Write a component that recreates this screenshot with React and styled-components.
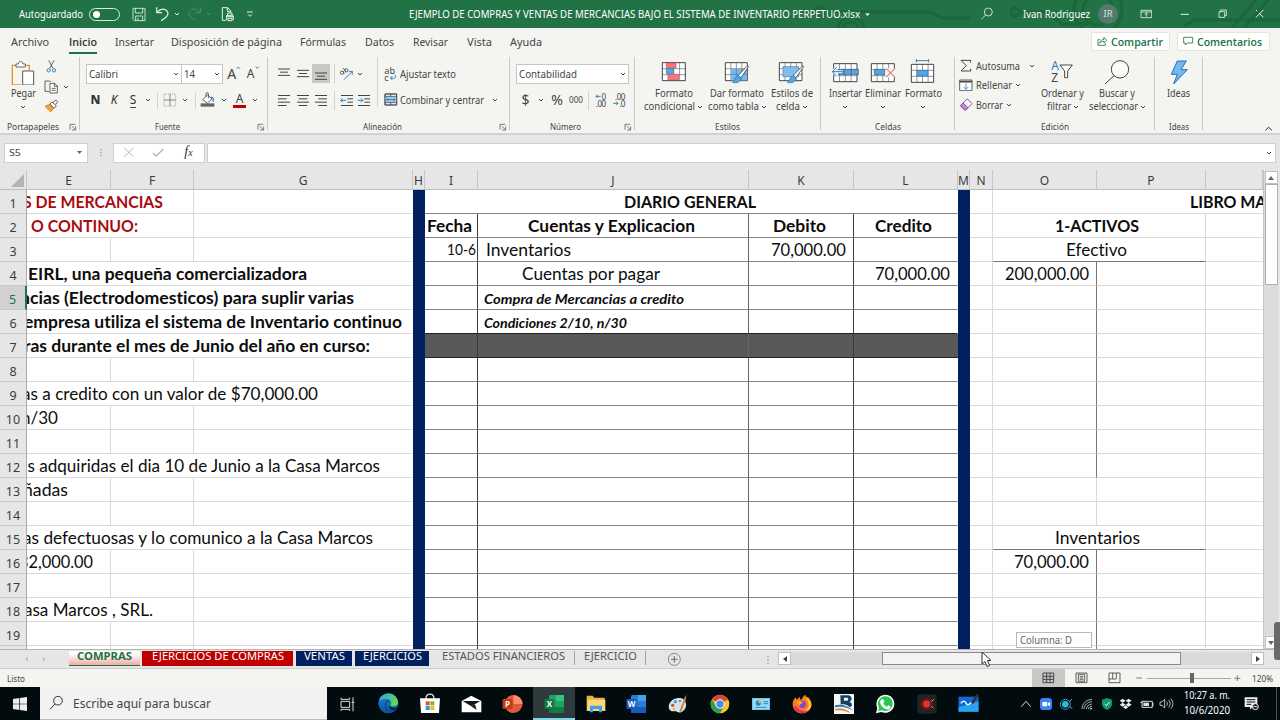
import { useLayoutEffect, useRef, useState } from "react"
import styled, { createGlobalStyle } from "styled-components"

const UI_FONT = `"Noto Sans", "Open Sans", sans-serif`
const SEMI_FONT = `"Open Sans", "Noto Sans", sans-serif`
const CELL_FONT = `Lato, "Open Sans", sans-serif`

// Condenses or widens the text so it fills exactly w pixels
function Fit({ w, children, ...rest }) {
    const ref = useRef(null)
    const [scale, setScale] = useState(1)

    useLayoutEffect(() => {
        const el = ref.current
        el.style.transform = "none"
        setScale(w / el.getBoundingClientRect().width)
    }, [w, children])

    return (
        <FitBox $w={w} {...rest}>
            <FitText ref={ref} style={{ transform: `scaleX(${scale})` }}>{children}</FitText>
        </FitBox>
    )
}

// Drawings are made at three units per pixel
function Glyph({ box, children, ...rest }) {
    const [, , w, h] = box.split(" ").map(Number)
    return (
        <svg viewBox={box} width={w / 3} height={h / 3} fill="none" stroke="#444" strokeWidth="3" {...rest}>
            {children}
        </svg>
    )
}

const Chevron = ({ color = "#444" }) => (
    <Glyph box="0 0 18 12" stroke={color}><path d="M3 3 9 9 15 3" /></Glyph>
)

const Launcher = () => (
    <Glyph box="0 0 24 24" strokeWidth="2">
        <path d="M3 20V4H19M8 9 19 20M20 10V21H9" />
    </Glyph>
)

function TitleBar() {
    return (
        <Title>
            <Circuit viewBox="0 0 480 28" width="480" height="28">
                <path d="M30 12H130L142 18H170M0 12H14" />
                <circle cx="20" cy="12" r="5" />
                <circle cx="51" cy="30" r="13" />
                <circle cx="51" cy="30" r="8" />
                <circle cx="215" cy="12" r="4" />
                <path d="M220 12H248L262 24H288" />
                <circle cx="298" cy="10" r="24" />
                <circle cx="298" cy="10" r="15" />
                <path d="M384 26 394 20H480M432 28 456 0M444 28 468 0" />
            </Circuit>
            <Slot $w={19} />
            <TitleText><Fit w={64}>Autoguardado</Fit></TitleText>
            <Slot $w={42}><Toggle><Knob /></Toggle></Slot>
            <Slot $w={27}>
                <Glyph box="396 24 42 45" stroke="#e6f2ea" strokeWidth="2.5">
                    <path d="M399 28H435V65H403L399 61ZM406 28V42H428V28M407 65V51H428V65M414 65V57" />
                </Glyph>
            </Slot>
            <Slot $w={20}>
                <Glyph box="466 22 42 48" stroke="#e6f2ea" strokeWidth="3.5">
                    <path d="M471 26V42H487M472 41C482 29 496 28 503 38C509 50 499 57 484 66" />
                </Glyph>
            </Slot>
            <Slot $w={9}><Chevron color="#e6f2ea" /></Slot>
            <Slot $w={27}>
                <Glyph box="566 22 42 48" stroke="#4c9069" strokeWidth="3">
                    <path d="M603 26V42H587M602 41C592 29 578 28 571 38C565 50 575 57 590 66" />
                </Glyph>
            </Slot>
            <Slot $w={2}><Chevron color="#4c9069" /></Slot>
            <Slot $w={36}>
                <Glyph box="664 22 42 48" stroke="#e6f2ea" strokeWidth="3">
                    <path d="M679 65H668V27H684L693 36V42M683 27V38H693M681 56V50H700V56M684 50V43H697V50M681 65V54H701V63H698M685 59H697V66H685Z" />
                </Glyph>
            </Slot>
            <Slot $w={8}>
                <Glyph box="740 32 24 24" stroke="#e6f2ea"><path d="M743 38H760M746 45 752 51 758 45" /></Glyph>
            </Slot>
            <Slot $w={155} />
            <TitleText><Fit w={451}>EJEMPLO DE COMPRAS Y VENTAS DE MERCANCIAS BAJO EL SISTEMA DE INVENTARIO PERPETUO.xlsx</Fit></TitleText>
            <Slot $w={15}><svg width="5" height="3"><path d="M0 0H5L2.5 3Z" fill="#fff" /></svg></Slot>
            <Slot $w={100} />
            <Slot $w={26}>
                <Glyph box="96 22 40 40" stroke="#e6f2ea" strokeWidth="2.5">
                    <circle cx="118" cy="37" r="12" /><path d="M110 46 97 59" />
                </Glyph>
            </Slot>
            <Slot $w={22} />
            <TitleText><Fit w={67}>Ivan Rodriguez</Fit></TitleText>
            <Slot $w={36}><Avatar>IR</Avatar></Slot>
            <Slot $w={40}>
                <Glyph box="570 28 38 30" stroke="#e6f2ea" strokeWidth="2.5">
                    <path d="M573 32H605V54H573ZM573 37H605M589 51V41M584 45 589 40 594 45" />
                </Glyph>
            </Slot>
            <Slot $w={38}><Glyph box="690 36 30 12" stroke="#e6f2ea"><path d="M692 43H717" /></Glyph></Slot>
            <Slot $w={37}>
                <Glyph box="804 28 30 30" stroke="#e6f2ea" strokeWidth="2.5">
                    <path d="M807 36H824V53H807ZM812 36V31H829V48H824" />
                </Glyph>
            </Slot>
            <Slot $w={38}><Glyph box="918 28 28 28" stroke="#e6f2ea"><path d="M921 31 943 53M943 31 921 53" /></Glyph></Slot>
        </Title>
    )
}

const menuTabs = [
    ["Archivo", 38, 10.5], ["Inicio", 28, 20.5], ["Insertar", 39, 17.5], ["Disposición de página", 111, 17.5],
    ["Fórmulas", 46, 18], ["Datos", 29, 18.5], ["Revisar", 35, 19], ["Vista", 25, 19], ["Ayuda", 32, 18],
]

function MenuBar() {
    return (
        <Menu>
            {menuTabs.map(([name, w, gap]) => (
                <MenuTab key={name} $gap={gap} $active={name === "Inicio"}><Fit w={w}>{name}</Fit></MenuTab>
            ))}
            <Push />
            <ShareButton $w={79}>
                <Glyph box="442 108 32 32" stroke="#217346" strokeWidth="2.5">
                    <path d="M451 119H445V136H467V130M450 130C452 121 458 118 463 118V112L471 121 463 129V124C457 124 453 126 450 130Z" />
                </Glyph>
                <Fit w={52}>Compartir</Fit>
            </ShareButton>
            <ShareButton $w={93}>
                <Glyph box="702 108 32 32" stroke="#217346" strokeWidth="2.5">
                    <path d="M704 112H731V129H715L709 135V129H704Z" />
                </Glyph>
                <Fit w={65}>Comentarios</Fit>
            </ShareButton>
        </Menu>
    )
}

const Lines = ({ rows, arrow, into }) => (
    <Glyph box="0 0 42 39" strokeWidth="3">
        {rows.map(([x1, x2], i) => (
            <path key={i} d={`M${x1} ${4.5 + i * 10}H${x2}`} />
        ))}
        {arrow && <path stroke="#2f7fc1" d={into ? "M2 19H18M12 13 18 19 12 25" : "M18 19H2M8 13 2 19 8 25"} />}
    </Glyph>
)

const left = [[3, 39], [3, 29], [3, 39], [3, 29]]
const middle = [[3, 39], [8, 34], [3, 39], [8, 34]]
const right = [[3, 39], [13, 39], [3, 39], [13, 39]]
const indent = [[3, 39], [22, 39], [22, 39], [3, 39]]

const VAlign = ({ y }) => (
    <Glyph box="0 0 42 45"><path d={`M3 ${y}H39M9 ${y + 9.5}H33M3 ${y + 19}H39`} /></Glyph>
)

const TableLines = ({ x, y, w = 69, h = 54 }) => (
    <>
        <path d={`M${x} ${y}h${w}v${h}h-${w}Z`} fill="#fff" stroke="none" />
        <path strokeWidth="2" stroke="#666" d={`M${x} ${y + h / 3}h${w}M${x} ${y + (h * 2) / 3}h${w}M${x + w / 4} ${y}v${h}M${x + w / 2} ${y}v${h}M${x + (w * 3) / 4} ${y}v${h}`} />
        <path d={`M${x} ${y}h${w}v${h}h-${w}Z`} />
    </>
)

const Brush = ({ x, y }) => (
    <g transform={`translate(${x} ${y})`} strokeWidth="2.5">
        <path d="M50 3 28 35 20 28 45 2C48-1 53 0 50 3Z" fill="#fff" />
        <path d="M20 29 28 36C28 48 14 53 2 49C9 45 9 31 20 29Z" fill="#5ba3dc" stroke="#2f7fc1" />
    </g>
)

function BigButton({ w, icon, lines, chevron }) {
    return (
        <Big $w={w}>
            <BigIcon>{icon}</BigIcon>
            {lines.map(([text, tw, arrow]) => (
                <BigLine key={text}>
                    <Fit w={tw}>{text}</Fit>
                    {arrow && <Chevron />}
                </BigLine>
            ))}
            {chevron && <BigLine><Chevron /></BigLine>}
        </Big>
    )
}

function Group({ w, label, lw, launcher, children }) {
    return (
        <>
            <GroupBox $w={w - 1}>
                <GroupBody>{children}</GroupBody>
                <GroupFoot>
                    <GroupLabel><Fit w={lw}>{label}</Fit></GroupLabel>
                    {launcher && <Slot $w={13}><Launcher /></Slot>}
                </GroupFoot>
            </GroupBox>
            <GroupRule />
        </>
    )
}

function Ribbon() {
    return (
        <RibbonBar>
            <Group w={80} label="Portapapeles" lw={52} launcher>
                <BigButton w={46} chevron lines={[["Pegar", 25]]} icon={
                    <Glyph box="42 174 72 80" strokeWidth="3">
                        <path d="M60 193H46V252H72M84 193H97V208" stroke="#e8912d" strokeWidth="4" />
                        <path d="M57 198V189H64C64 179 78 179 78 189H85V198Z" fill="#fff" stroke="#666" />
                        <path d="M77 210H110V252H77Z" fill="#fff" stroke="#555" />
                    </Glyph>
                } />
                <Stack>
                    <Line $h={20}><Slot $w={11}>
                        <Glyph box="136 182 32 40">
                            <path d="M144 183 157 207M160 183 147 207" strokeWidth="2.5" />
                            <circle cx="144" cy="213" r="5" stroke="#2f7fc1" /><circle cx="160" cy="213" r="5" stroke="#2f7fc1" />
                        </Glyph>
                    </Slot></Line>
                    <Line $h={19}>
                        <Slot $w={11}>
                            <Glyph box="131 240 44 42" strokeWidth="2.5">
                                <path d="M146 274H134V243H148L151 246" />
                                <path d="M149 250H163L171 258V279H149ZM162 250V259H171M154 265H166M154 271H166" fill="#fff" />
                            </Glyph>
                        </Slot>
                        <Slot $w={17}><Chevron /></Slot>
                    </Line>
                    <Line $h={20}><Slot $w={11}>
                        <Glyph box="131 298 44 42">
                            <path d="M134 320 148 314 160 326 151 337Z" fill="#f2a33a" stroke="#e08a20" />
                            <path d="M149 313 155 307 168 318 161 326ZM158 308 167 301 172 306 166 314" fill="#fff" strokeWidth="2.5" />
                        </Glyph>
                    </Slot></Line>
                </Stack>
            </Group>

            <Group w={188} label="Fuente" lw={25} launcher>
                <Stack>
                    <Line $h={33}>
                        <Slot $w={6} />
                        <Combo $w={96}><Fit w={29}>Calibri</Fit><Chevron /></Combo>
                        <Combo $w={41} $joined><Fit w={11}>14</Fit><Chevron /></Combo>
                        <Slot $w={22}><FontSizer $size={14}>A<Glyph box="0 0 14 10" stroke="#2f7fc1"><path d="M2 8 7 3 12 8" /></Glyph></FontSizer></Slot>
                        <Slot $w={16}><FontSizer $size={12}>A<Glyph box="0 0 14 10" stroke="#2f7fc1"><path d="M2 2 7 7 12 2" /></Glyph></FontSizer></Slot>
                    </Line>
                    <Line $h={20}>
                        <Slot $w={6} />
                        <Slot $w={19}><Style $weight={800}>N</Style></Slot>
                        <Slot $w={18}><Style $italic>K</Style></Slot>
                        <Slot $w={20}><Style $under>S</Style></Slot>
                        <Slot $w={10}><Chevron /></Slot>
                        <Slot $w={9}><Rule $h={17} /></Slot>
                        <Slot $w={16}>
                            <Glyph box="490 278 42 42" strokeWidth="2" stroke="#777">
                                <path d="M493 281H528V317H493Z" strokeDasharray="3 3" />
                                <path d="M511 281V317M493 299H528" stroke="#555" />
                            </Glyph>
                        </Slot>
                        <Slot $w={14}><Chevron /></Slot>
                        <Slot $w={7}><Rule $h={17} /></Slot>
                        <Slot $w={18}>
                            <Glyph box="602 276 46 48" strokeWidth="2.5">
                                <path d="M610 299 625 284 638 297 624 309ZM620 290V281C620 277 627 277 627 281V295" fill="#fff" />
                                <path d="M635 292C643 291 642 299 641 305" stroke="#2f7fc1" strokeWidth="4" />
                                <path d="M604 310H645V320H604Z" fill="#666" stroke="none" />
                            </Glyph>
                        </Slot>
                        <Slot $w={13}><Chevron /></Slot>
                        <Slot $w={19}><FontColor>A</FontColor></Slot>
                        <Slot $w={12}><Chevron /></Slot>
                    </Line>
                </Stack>
            </Group>

            <Group w={242} label="Alineación" lw={39} launcher>
                <Stack>
                    <Line $h={33}>
                        <Slot $w={7} />
                        <Slot $w={18}><VAlign y={9} /></Slot>
                        <Slot $w={19}><VAlign y={13} /></Slot>
                        <Pressed><VAlign y={21} /></Pressed>
                        <Slot $w={8}><Rule $h={19} /></Slot>
                        <Slot $w={17}>
                            <Glyph box="0 0 44 42">
                                <path d="M15 38 39 14M30 13H40V23" stroke="#2f7fc1" />
                                <g strokeWidth="2.5"><circle cx="9" cy="17" r="5" /><path d="M11 12 16 20M12 3 22 14" /><circle cx="22" cy="10" r="5" /></g>
                            </Glyph>
                        </Slot>
                        <Slot $w={10}><Chevron /></Slot>
                    </Line>
                    <Line $h={20}>
                        <Slot $w={7} />
                        <Slot $w={18}><Lines rows={left} /></Slot>
                        <Slot $w={19}><Lines rows={middle} /></Slot>
                        <Slot $w={18}><Lines rows={right} /></Slot>
                        <Slot $w={8}><Rule $h={19} /></Slot>
                        <Slot $w={17}><Lines rows={indent} arrow /></Slot>
                        <Slot $w={18}><Lines rows={indent} arrow into /></Slot>
                    </Line>
                </Stack>
                <Slot $w={8}><Rule $h={50} /></Slot>
                <Stack>
                    <Line $h={33}>
                        <Slot $w={19}>
                            <WrapIcon>
                                <span>ab</span>
                                <span>c<Glyph box="0 0 24 20" stroke="#2f7fc1"><path d="M18 2C24 12 16 14 5 12M10 6 4 12 10 18" /></Glyph></span>
                            </WrapIcon>
                        </Slot>
                        <Fit w={56}>Ajustar texto</Fit>
                    </Line>
                    <Line $h={20}>
                        <Slot $w={19}>
                            <Glyph box="341 115 42 40" strokeWidth="2.5">
                                <path d="M344 118H379V151H344Z" fill="#fff" />
                                <path d="M344 126H379V143H344Z" fill="#9fd0f3" stroke="none" />
                                <path d="M344 125H379M344 144H379M361 118V125M361 144V151M344 118H379V151H344Z" />
                                <path d="M349 135H374M354 130 349 135 354 140M369 130 374 135 369 140" stroke="#1f6fb3" />
                            </Glyph>
                        </Slot>
                        <Fit w={84}>Combinar y centrar</Fit>
                        <Slot $w={22}><Chevron /></Slot>
                    </Line>
                </Stack>
            </Group>

            <Group w={125} label="Número" lw={31} launcher>
                <Stack>
                    <Line $h={33}>
                        <Slot $w={6} />
                        <Combo $w={113}><Fit w={58}>Contabilidad</Fit><Chevron /></Combo>
                    </Line>
                    <Line $h={20}>
                        <Slot $w={7} />
                        <Slot $w={17}><Symbol $size={14}>$</Symbol></Slot>
                        <Slot $w={13}><Chevron /></Slot>
                        <Slot $w={20}><Symbol $size={14}>%</Symbol></Slot>
                        <Slot $w={18}><Symbol $size={9}><Fit w={14}>000</Fit></Symbol></Slot>
                        <Slot $w={7}><Rule $h={19} /></Slot>
                        <Slot $w={17}>
                            <Decimals>
                                <span><Glyph box="0 0 18 14" stroke="#2f7fc1"><path d="M17 7H3M8 2 3 7 8 12" /></Glyph>0</span>
                                <span>.00</span>
                            </Decimals>
                        </Slot>
                        <Slot $w={20}>
                            <Decimals>
                                <span>.00</span>
                                <span><Glyph box="0 0 18 14" stroke="#2f7fc1"><path d="M1 7H15M10 2 15 7 10 12" /></Glyph>.0</span>
                            </Decimals>
                        </Slot>
                    </Line>
                </Stack>
            </Group>

            <Group w={186} label="Estilos" lw={25}>
                <Slot $w={6} />
                <BigButton w={65} lines={[["Formato", 38], ["condicional", 51, true]]} icon={
                    <Glyph box="94 18 78 70">
                        <TableLines x={98} y={26} />
                        <path d="M110 28H139V42H110ZM116 61H147V77H116Z" fill="#f4777f" stroke="#d9535c" strokeWidth="2" />
                        <path d="M110 44H131V59H110Z" fill="#5ba3dc" stroke="#2f7fc1" strokeWidth="2" />
                    </Glyph>
                } />
                <BigButton w={62} lines={[["Dar formato", 54], ["como tabla", 51, true]]} icon={
                    <Glyph box="285 18 80 70">
                        <TableLines x={289} y={26} w={66} />
                        <path d="M306 44H354V79H306Z" fill="#7db9e8" stroke="none" />
                        <path d="M322 44V79M338 44V79M306 61H354" stroke="#2f7fc1" strokeWidth="2" />
                        <Brush x={308} y={36} />
                    </Glyph>
                } />
                <BigButton w={47} lines={[["Estilos de", 42], ["celda", 24, true]]} icon={
                    <Glyph box="447 18 80 70">
                        <TableLines x={451} y={26} w={68} />
                        <path d="M462 38H509V68H462Z" fill="#85bdea" stroke="#2f7fc1" strokeWidth="2" />
                        <Brush x={473} y={36} />
                    </Glyph>
                } />
            </Group>

            <Group w={134} label="Celdas" lw={26}>
                <Slot $w={6} />
                <BigButton w={36} chevron lines={[["Insertar", 33]]} icon={
                    <Glyph box="606 18 84 66">
                        <TableLines x={614} y={26} w={70} />
                        <path d="M629 43H688V59H629Z" fill="#5ba3dc" stroke="#1f5f9f" strokeWidth="2" />
                        <path d="M645 43V59M666 43V59" strokeWidth="2" />
                        <path d="M640 50H610M625 36 610 50 625 64" stroke="#f4f4f1" strokeWidth="8" />
                        <path d="M640 50H610M623 37 610 50 623 63" stroke="#2f7fc1" />
                    </Glyph>
                } />
                <BigButton w={40} chevron lines={[["Eliminar", 36]]} icon={
                    <Glyph box="722 18 80 66">
                        <TableLines x={726} y={26} w={69} />
                        <path d="M735 43H766V59H735Z" fill="#5ba3dc" stroke="#1f5f9f" strokeWidth="2" />
                        <path d="M770 40H799V67H770Z" fill="#f4f4f1" stroke="none" />
                        <path d="M770 40 797 67M797 40 770 67" stroke="#e0454d" />
                    </Glyph>
                } />
                <BigButton w={40} chevron lines={[["Formato", 37]]} icon={
                    <Glyph box="842 10 76 78">
                        <TableLines x={846} y={26} w={67} />
                        <path d="M863 44H896V61H863Z" fill="#5ba3dc" stroke="#1f6fb3" strokeWidth="2" />
                        <path d="M861 15H898M861 10V20M898 10V20" stroke="#2f7fc1" />
                    </Glyph>
                } />
            </Group>

            <Group w={200} label="Edición" lw={28}>
                <Stack $w={83}>
                    <Line $h={18}>
                        <Slot $w={21}><Glyph box="34 176 36 40"><path d="M66 187V180H37L53 196 37 212H66V205" /></Glyph></Slot>
                        <Fit w={44}>Autosuma</Fit>
                        <Slot $w={23}><Chevron /></Slot>
                    </Line>
                    <Line $h={20}>
                        <Slot $w={21}>
                            <Glyph box="26 235 44 38" strokeWidth="2.5">
                                <path d="M31 238H68V270H31Z" fill="#fff" /><path d="M31 243H68" strokeWidth="5" />
                                <path d="M50 248V266M43 259 50 266 57 259" stroke="#2f7fc1" />
                            </Glyph>
                        </Slot>
                        <Fit w={36}>Rellenar</Fit>
                        <Slot $w={11}><Chevron /></Slot>
                    </Line>
                    <Line $h={20}>
                        <Slot $w={21}>
                            <Glyph box="28 292 42 40" stroke="#8a4a9e">
                                <path d="M53 295 67 309 47 329 32 315Z" fill="#fff" /><path d="M40 307 55 321 47 329 32 315Z" fill="#c78bd6" />
                            </Glyph>
                        </Slot>
                        <Fit w={27}>Borrar</Fit>
                        <Slot $w={12}><Chevron /></Slot>
                    </Line>
                </Stack>
                <BigButton w={49} lines={[["Ordenar y", 43], ["filtrar", 24, true]]} icon={
                    <SortIcon>
                        <SortLetters><b>A</b><i>Z</i></SortLetters>
                        <Glyph box="334 196 44 46"><path d="M337 199H374L360 217V237H351V217Z" fill="#fff" /></Glyph>
                    </SortIcon>
                } />
                <BigButton w={60} lines={[["Buscar y", 36], ["seleccionar", 49, true]]} icon={
                    <Glyph box="462 176 78 78"><circle cx="510" cy="207" r="26" fill="#fbfbfa" /><path d="M492 226 465 251" /></Glyph>
                } />
            </Group>

            <Group w={48} label="Ideas" lw={20}>
                <BigButton w={47} lines={[["Ideas", 23]]} icon={
                    <Glyph box="658 176 60 78"><path d="M683 182H710L694 208H713L672 251 683 222H665Z" fill="#74b8f0" stroke="#2470b3" /></Glyph>
                } />
            </Group>
            <Push />
            <Collapse><Glyph box="0 0 28 16" stroke="#333"><path d="M4 13 14 4 24 13" /></Glyph></Collapse>
        </RibbonBar>
    )
}

function FormulaBar() {
    return (
        <Formula>
            <NameBox>
                <Fit w={12}>S5</Fit>
                <svg width="5" height="3"><path d="M0 0H5L2.5 3Z" fill="#666" /></svg>
            </NameBox>
            <Slot $w={25}><Glyph box="0 0 6 30" stroke="#999" strokeWidth="4" strokeDasharray="4 5"><path d="M3 3V28" /></Glyph></Slot>
            <FormulaButtons>
                <Slot $w={29}><Glyph box="368 36 34 32" stroke="#b5b5b5"><path d="M372 39 399 65M399 39 372 65" /></Glyph></Slot>
                <Slot $w={31}><Glyph box="458 38 38 28" stroke="#b5b5b5" strokeWidth="4"><path d="M461 53 470 62 492 41" /></Glyph></Slot>
                <Slot $w={29}><Fx>f<small>x</small></Fx></Slot>
            </FormulaButtons>
            <FormulaInput><Chevron /></FormulaInput>
        </Formula>
    )
}

const columns = [
    ["E", 84], ["F", 83], ["G", 219], ["H", 12], ["I", 53], ["J", 271], ["K", 105],
    ["L", 104], ["M", 12], ["N", 23], ["O", 104], ["P", 109], ["", 57],
]

// Text that runs in from the columns at the left: span, start offset, width
const notes = {
    1: { span: 2, x: -4, w: 140, text: "S DE MERCANCIAS", bold: true, color: "#a80b0f" },
    2: { span: 2, x: 4, w: 107, text: "O CONTINUO:", bold: true, color: "#a80b0f" },
    4: { span: 3, x: 1, w: 279, text: "EIRL, una pequeña comercializadora", bold: true },
    5: { span: 3, x: -7, w: 334, text: "ncias (Electrodomesticos) para suplir varias", bold: true },
    6: { span: 3, x: -3, w: 378, text: "empresa utiliza el sistema de Inventario continuo", bold: true },
    7: { span: 3, x: -3, w: 346, text: "ras durante el mes de Junio del año en curso:", bold: true },
    9: { span: 3, x: -5, w: 296, text: "as a credito con un valor de $70,000.00" },
    10: { span: 1, x: -6, w: 37, text: "n/30" },
    12: { span: 3, x: -8, w: 361, text: "as adquiridas el dia 10 de Junio a la Casa Marcos" },
    13: { span: 1, x: -4, w: 45, text: "ñadas" },
    15: { span: 3, x: -4, w: 350, text: "as defectuosas y lo comunico a la Casa Marcos" },
    16: { span: 1, x: -8, w: 74, text: "32,000.00" },
    18: { span: 2, x: -3, w: 129, text: "asa Marcos , SRL." },
}

const journal = {
    2: [
        { w: 45, text: "Fecha", bold: true, x: 2 }, { w: 167, text: "Cuentas y Explicacion", bold: true, x: 50 },
        { w: 53, text: "Debito", bold: true, x: 24 }, { w: 57, text: "Credito", bold: true, x: 21 },
    ],
    3: [{ w: 29, text: "10-6", size: 14.5, x: 22 }, { w: 85, text: "Inventarios", x: 8 }, { w: 75, text: "70,000.00", x: 22 }, {}],
    4: [{}, { w: 138, text: "Cuentas por pagar", x: 44 }, {}, { w: 75, text: "70,000.00", x: 21 }],
    5: [{}, { w: 200, text: "Compra de Mercancias a credito", bold: true, italic: true, size: 13.5, x: 6, drop: 4 }, {}, {}],
    6: [{}, { w: 143, text: "Condiciones 2/10, n/30", bold: true, italic: true, size: 13.5, x: 6, drop: 4 }, {}, {}],
}

const accounts = {
    2: { w: 84, text: "1-ACTIVOS", bold: true, x: 62 },
    3: { w: 61, text: "Efectivo", x: 73 },
    15: { w: 85, text: "Inventarios", x: 62 },
}
const balances = { 4: { w: 84, text: "200,000.00", x: 12 }, 16: { w: 75, text: "70,000.00", x: 21 } }

const GRID = "#d9d9d9"
const INK = "#858585"
const DARK = "#3c3c3c"

function CellText({ cell }) {
    if (!cell?.text) return null
    return (
        <Text $bold={cell.bold} $italic={cell.italic} $color={cell.color} $size={cell.size} $x={cell.x} $drop={cell.drop}>
            <Fit w={cell.w}>{cell.text}</Fit>
        </Text>
    )
}

function SheetRow({ n }) {
    const note = notes[n]
    const free = 3 - (note ? note.span : 0)
    const shaded = n === 7
    const cells = journal[n] || [{}, {}, {}, {}]
    const underlined = n === 3 || n === 15
    const ledger = (n >= 4 && n <= 12) || n >= 16

    return (
        <GridRow>
            <RowHead $active={n === 5}>{n < 20 ? n : null}</RowHead>
            {note && <Cell $span={note.span} $right={note.span < 3 ? GRID : null}><CellText cell={note} /></Cell>}
            {Array.from({ length: free }, (_, i) => (
                <Cell key={i} $right={i < free - 1 ? GRID : null} />
            ))}
            <Band />
            {n === 1
                ? <Cell $span={4} $bottom={INK}><CellText cell={{ x: 199, w: 132, text: "DIARIO GENERAL", bold: true }} /></Cell>
                : cells.map((cell, i) => (
                    <Cell key={i} $bottom={shaded || n === 6 ? "#222" : INK} $right={i === 3 ? null : i === 1 ? "#666" : DARK}
                        $fill={shaded ? "#595959" : null}>
                        <CellText cell={cell} />
                    </Cell>
                ))}
            <Band />
            <Cell $right={GRID} />
            {n === 1
                ? <Cell $span={3}><CellText cell={{ x: 197, w: 108, text: "LIBRO MAYOR", bold: true }} /></Cell>
                : <>
                    {n === 2 || underlined
                        ? <Cell $span={2} $right={GRID} $bottom={underlined ? "#777" : null}><CellText cell={accounts[n]} /></Cell>
                        : <>
                            <Cell $right={ledger ? "#777" : GRID}><CellText cell={balances[n]} /></Cell>
                            <Cell $right={GRID} />
                        </>}
                    <Cell />
                </>}
        </GridRow>
    )
}

function Sheet() {
    return (
        <SheetArea>
            <SheetPane>
                <GridRow $head>
                    <Corner><svg width="13" height="13"><path d="M13 0V13H0Z" fill="#b4b4b4" /></svg></Corner>
                    {columns.map(([name], i) => <ColHead key={i}>{name}</ColHead>)}
                </GridRow>
                {Array.from({ length: 20 }, (_, i) => <SheetRow key={i} n={i + 1} />)}
                <Tip><Fit w={52}>Columna: D</Fit></Tip>
            </SheetPane>
            <VScroll>
                <ScrollButton><svg width="6" height="4"><path d="M3 0 6 4H0Z" fill="#666" /></svg></ScrollButton>
                <VThumb />
                <Push />
                <ScrollButton><svg width="6" height="4"><path d="M0 0H6L3 4Z" fill="#666" /></svg></ScrollButton>
            </VScroll>
        </SheetArea>
    )
}

const sheetTabs = [
    { name: "COMPRAS", w: 55, box: 71, kind: "active" },
    { name: "EJERCICIOS DE COMPRAS", w: 132, box: 151, kind: "red" },
    { name: "VENTAS", w: 41, box: 56, kind: "navy" },
    { name: "EJERCICIOS", w: 59, box: 74, kind: "navy" },
]

function SheetTabs() {
    return (
        <TabStrip>
            <Slot $w={69}>
                <Glyph box="6 0 72 20" fill="#b5b5b5" stroke="none"><path d="M20 3V17L13 10Z" /><path d="M58 3 65 10 58 17Z" transform="translate(8 0)" /></Glyph>
            </Slot>
            {sheetTabs.map(t => (
                <SheetTab key={t.name} $w={t.box} $kind={t.kind}><Fit w={t.w}>{t.name}</Fit></SheetTab>
            ))}
            <PlainTab $w={143}><Fit w={123}>ESTADOS FINANCIEROS</Fit></PlainTab>
            <PlainTab $w={71}><Fit w={53}>EJERCICIO</Fit></PlainTab>
            <Slot $w={57}>
                <Glyph box="0 0 44 44" stroke="#777" strokeWidth="2.5"><circle cx="22" cy="22" r="18" /><path d="M22 12V32M12 22H32" stroke="#555" /></Glyph>
            </Slot>
            <Push />
            <Slot $w={21}><Glyph box="0 0 6 30" stroke="#999" strokeWidth="4" strokeDasharray="4 6"><path d="M3 3V28" /></Glyph></Slot>
            <HScroll>
                <ScrollButton><svg width="4" height="6"><path d="M4 0V6L0 3Z" fill="#444" /></svg></ScrollButton>
                <HThumb />
                <Push />
                <ScrollButton><svg width="4" height="6"><path d="M0 0V6L4 3Z" fill="#444" /></svg></ScrollButton>
            </HScroll>
        </TabStrip>
    )
}

function StatusBar() {
    return (
        <Status>
            <Fit w={18}>Listo</Fit>
            <Push />
            <ViewButton $on><Glyph box="216 183 38 36"><path d="M219 186H251V215H219ZM219 196H251M219 205H251M230 186V215M240 186V215" /></Glyph></ViewButton>
            <ViewButton><Glyph box="316 183 38 36" strokeWidth="2.5"><path d="M319 186H352V215H319ZM326 190H345V211H326ZM330 196H341M330 201H341M330 206H341" /></Glyph></ViewButton>
            <ViewButton><Glyph box="416 183 38 36"><path d="M419 186H452V215H419ZM430 186V203M441 186V203M419 204H441" strokeWidth="2.5" /></Glyph></ViewButton>
            <Slot $w={16}><Glyph box="0 0 20 20" stroke="#777"><path d="M1 9H19" /></Glyph></Slot>
            <Slider><SliderKnob /></Slider>
            <Slot $w={13}><Glyph box="0 0 20 20" stroke="#777"><path d="M1 10H19M10 1V19" /></Glyph></Slot>
            <Zoom><Fit w={21}>120%</Fit></Zoom>
        </Status>
    )
}

const OfficeIcon = ({ letter, dark, mid, light, round }) => (
    <svg width="21" height="20" viewBox="0 0 21 20">
        {round
            ? <><circle cx="11.5" cy="10" r="9" fill={mid} /><path d="M11.5 1A9 9 0 0 1 20.5 10H11.5Z" fill={light} /></>
            : <><rect x="5" y="1" width="15" height="18" rx="1.5" fill={mid} /><rect x="12" y="1" width="8" height="6" fill={light} /><rect x="5" y="13" width="15" height="6" fill={dark} /></>}
        <rect x="0.5" y="5" width="10" height="10" rx="1" fill={dark} />
        <text x="5.5" y="13" fontSize="8" fontWeight="700" fontFamily="Open Sans" textAnchor="middle" fill="#fff">{letter}</text>
    </svg>
)

const apps = [
    <svg key="view" width="16" height="16" viewBox="0 0 48 48" fill="none" stroke="#ddd" strokeWidth="3">
        <path d="M6 16H32V34H6ZM6 5V10H32V5M6 45V40H32V45M42 4V46M38 19H46" />
    </svg>,
    <svg key="edge" width="21" height="21" viewBox="0 0 63 63">
        <defs>
            <linearGradient id="e1" x1="0" y1="0" x2="1" y2="0.4"><stop offset="0" stopColor="#2aa4e8" /><stop offset="1" stopColor="#5fd85a" /></linearGradient>
            <linearGradient id="e2" x1="0" y1="0" x2="0" y2="1"><stop offset="0" stopColor="#1b8fe0" /><stop offset="1" stopColor="#0c4d9c" /></linearGradient>
        </defs>
        <circle cx="31" cy="31" r="30" fill="url(#e2)" />
        <path d="M2 26C8-2 44-7 57 17C67 36 52 43 38 39C34 36 44 33 38 24C28 12 8 17 2 26Z" fill="url(#e1)" />
        <path d="M34 24C20 25 17 45 33 55C20 52 16 30 29 22ZM36 38C42 47 54 46 60 40C57 47 51 52 44 52C36 49 31 42 36 38Z" fill="#06202f" />
    </svg>,
    <svg key="store" width="20" height="21" viewBox="0 0 60 63">
        <path d="M18 17C18-1 42-1 42 17" fill="none" stroke="#ddd" strokeWidth="4" />
        <path d="M0 16H60L57 60H3Z" fill="#fff" />
        <path d="M17 25H29V37H17Z" fill="#e8502e" /><path d="M31 25H43V37H31Z" fill="#7db92f" />
        <path d="M17 39H29V51H17Z" fill="#2a9be0" /><path d="M31 39H43V51H31Z" fill="#f5b81e" />
    </svg>,
    <svg key="mail" width="21" height="18" viewBox="0 0 63 54">
        <path d="M2 18 31 2 61 18V52H2Z" fill="#fff" /><path d="M5 18H58L31 34Z" fill="#10181a" /><path d="M31 34 47 45 42 28Z" fill="#10181a" />
    </svg>,
    <OfficeIcon key="ppt" letter="P" dark="#c13b1b" mid="#dd5a3a" light="#ff8f6b" round />,
    <OfficeIcon key="xls" letter="X" dark="#107c41" mid="#21a366" light="#33c481" />,
    <svg key="files" width="20" height="18" viewBox="0 0 60 54">
        <path d="M2 2H20L25 8H56V48H2Z" fill="#e8b23c" /><path d="M4 14H58V48H4Z" fill="#fbd877" />
        <path d="M12 52V32H48V52H39V42H21V52Z" fill="#3f9fe0" />
    </svg>,
    <OfficeIcon key="doc" letter="W" dark="#185abd" mid="#2b7cd3" light="#41a5ee" />,
    <svg key="paint" width="20" height="20" viewBox="0 0 60 60">
        <path d="M30 12C8 14-2 34 4 46C10 58 24 47 28 54C40 60 56 46 54 30C52 16 42 11 30 12Z" fill="#d8e4ec" />
        <circle cx="14" cy="34" r="5" fill="#d94b3d" /><circle cx="22" cy="23" r="5" fill="#3f9fe0" /><circle cx="36" cy="21" r="4" fill="#5eb548" /><circle cx="18" cy="45" r="4" fill="#e8b23c" />
        <path d="M34 52 48 14 55 2 53 18 40 54Z" fill="#c48a52" />
    </svg>,
    <svg key="chrome" width="20" height="20" viewBox="0 0 60 60">
        <circle cx="30" cy="30" r="28" fill="#f6c52b" />
        <path d="M30 30 5.7 16A28 28 0 0 1 54.3 16Z" fill="#dc4437" /><path d="M54 16H30V30Z" fill="#dc4437" />
        <path d="M5.7 16 18 37 30 44 30 58A28 28 0 0 1 5.7 16Z" fill="#2d9d55" /><path d="M18 37 42 37 30 58Z" fill="#2d9d55" />
        <circle cx="30" cy="30" r="14" fill="#fff" /><circle cx="30" cy="30" r="11" fill="#4a88ec" />
    </svg>,
    <svg key="panel" width="18" height="14" viewBox="0 0 54 42">
        <rect width="54" height="36" y="3" fill="#6fc4ec" /><rect x="3" y="6" width="48" height="30" fill="#9bdcf5" />
        <circle cx="19" cy="18" r="8" fill="#2d84c4" /><path d="M19 18V10A8 8 0 0 1 27 18Z" fill="#f0b13c" /><path d="M34 14H48M34 20H48M10 31H44" stroke="#2d84c4" strokeWidth="3" />
    </svg>,
    <svg key="fox" width="20" height="20" viewBox="0 0 60 60">
        <path d="M2 30C2 20 7 14 11 10L14 17L24 8L25 18C30 16 32 8 39 2C38 10 45 13 48 9C55 16 59 24 58 34C56 49 45 58 30 58C14 58 2 47 2 30Z" fill="#ff7a1e" />
        <path d="M40 2C38 12 50 18 50 32C49 46 38 50 32 50C46 56 60 44 58 30C57 19 46 16 40 2Z" fill="#ffc936" />
        <path d="M5 38C9 52 21 58 32 58C42 58 50 53 54 46C40 54 22 52 12 36Z" fill="#e8305e" />
        <circle cx="31" cy="31" r="11" fill="#7a4bd0" /><path d="M14 24C22 20 28 22 33 26C27 28 24 30 22 35Z" fill="#ffb02e" />
    </svg>,
    <svg key="bank" width="20" height="20" viewBox="0 0 60 60">
        <path d="M0 0H60V60H0Z" fill="#f5f6f7" /><path d="M19 4H42C55 4 56 21 46 24C59 28 54 40 46 39C39 31 29 29 20 32ZM30 11V20H39C44 19 44 11 39 11Z" fill="#173f5f" fillRule="evenodd" />
        <path d="M3 34C20 29 42 34 57 50C40 40 20 36 3 40Z" fill="#2679b5" /><path d="M3 45C20 40 36 44 50 57C34 50 20 47 3 49Z" fill="#ef8b2c" />
    </svg>,
    <svg key="whats" width="20" height="20" viewBox="0 0 60 60">
        <path d="M3 58 7 43C-2 21 13 2 31 2C47 2 58 14 58 29C58 47 41 62 18 54Z" fill="#fff" /><path d="M9 52 12 42C3 25 14 7 31 7C44 7 53 17 53 29C53 45 36 56 19 49Z" fill="#2cc64f" />
        <path d="M20 16 25 16 28 24 25 28C28 34 32 37 36 38L40 34 47 38C47 46 39 48 32 45C23 41 13 30 16 20Z" fill="#fff" />
    </svg>,
    <svg key="rec" width="20" height="20" viewBox="0 0 60 60">
        <rect x="1" y="1" width="58" height="58" rx="10" fill="#222" /><circle cx="29" cy="30" r="16" fill="none" stroke="#8b1717" strokeWidth="3" /><circle cx="29" cy="30" r="11" fill="#ed2b2b" />
        <path d="M43 23 50 16M43 37 49 42" stroke="#bbb" strokeWidth="3" />
    </svg>,
    <svg key="board" width="21" height="19" viewBox="0 0 62 57">
        <path d="M1 8H61V53H1Z" fill="#1268d8" /><path d="M1 40 61 22V53H1Z" fill="#26a4ef" />
        <path d="M8 28C14 18 20 20 24 28C28 36 34 30 40 25" fill="none" stroke="#fff" strokeWidth="4" /><path d="M42 28 58 2" stroke="#333" strokeWidth="8" />
    </svg>,
]

function Taskbar() {
    return (
        <Bar>
            <Slot $w={40}>
                <svg width="14" height="14" viewBox="0 0 42 42" fill="#eee"><path d="M0 6 19 3V20H0ZM21 3 42 0V20H21ZM0 22H19V39L0 36ZM21 22H42V42L21 39Z" /></svg>
            </Slot>
            <Search>
                <Glyph box="148 317 44 46" stroke="#333"><circle cx="175" cy="334" r="13" /><path d="M166 344 151 360" /></Glyph>
                <Fit w={138}>Escribe aquí para buscar</Fit>
            </Search>
            {apps.map((icon, i) => <TaskItem key={i} $open={i === 5}>{icon}</TaskItem>)}
            <Push />
            <Slot $w={20}><Glyph box="156 266 38 28" stroke="#ddd"><path d="M160 289 174 273 188 289" /></Glyph></Slot>
            <Slot $w={20}>
                <svg width="12" height="12" viewBox="0 0 36 36"><rect width="36" height="36" rx="10" fill="#3f83f0" /><rect x="7" y="12" width="15" height="13" rx="3" fill="#fff" /><path d="M24 16 30 12V25L24 21Z" fill="#fff" /></svg>
            </Slot>
            <Slot $w={20}>
                <Glyph box="0 0 42 42"><circle cx="19" cy="22" r="15" stroke="#3d9db8" /><circle cx="19" cy="22" r="10" fill="#2fb7dd" stroke="none" /><path d="M32 14 38 7M33 29 39 35" stroke="#9cc" /></Glyph>
            </Slot>
            <Slot $w={22}>
                <Glyph box="0 0 42 42" stroke="#ccc" strokeWidth="2.5"><path d="M6 36C7 20 18 8 36 7M12 36C13 24 22 14 36 14M19 36C20 28 26 22 36 21M25 36C26 31 30 28 36 28" /><circle cx="33" cy="35" r="2" fill="#ccc" /></Glyph>
            </Slot>
            <Slot $w={18}>
                <Glyph box="0 0 36 42" stroke="none"><path d="M18 3 33 8V22C32 31 26 36 18 39C10 36 4 31 3 22V8Z" fill="#12996b" /><path d="M11 21 16 26 26 15" stroke="#fff" /></Glyph>
            </Slot>
            <Slot $w={20}>
                <Glyph box="0 0 40 36" fill="#eee" stroke="none"><path d="M11 2 20 8 11 14 2 8ZM29 2 38 8 29 14 20 8ZM11 14 20 20 11 26 2 20ZM29 14 38 20 29 26 20 20ZM20 22 28 28 20 33 12 28Z" /></Glyph>
            </Slot>
            <Slot $w={21}>
                <Glyph box="0 0 42 30" stroke="#ddd"><path d="M6 7H37V25H6ZM39 12V20M1 10H8" /><path d="M10 11H27V21H10Z" fill="#ddd" stroke="none" /></Glyph>
            </Slot>
            <Slot $w={20}>
                <Glyph box="0 0 46 40" stroke="#ddd" strokeWidth="2.5"><path d="M3 15H9L17 7V33L9 25H3ZM23 14C26 18 26 22 23 26M29 9C35 16 35 24 29 31M35 5C44 14 44 26 35 35" /></Glyph>
            </Slot>
            <Clock><Fit w={46}>10:27 a. m.</Fit><Fit w={46}>10/6/2020</Fit></Clock>
            <Slot $w={32}>
                <Glyph box="0 0 46 46" stroke="none"><path d="M2 4H40V33H25L18 41V33H2Z" fill="#eee" /><path d="M8 11H34M8 18H34M8 25H22" stroke="#111" /><circle cx="34" cy="32" r="9" fill="#111" stroke="#eee" strokeWidth="3" /><path d="M28 32H40" stroke="#eee" /></Glyph>
            </Slot>
            <Slot $w={8} />
            <Desk />
        </Bar>
    )
}

export default function App() {
    return (
        <Window>
            <Reset />
            <TitleBar />
            <MenuBar />
            <Ribbon />
            <FormulaBar />
            <Sheet />
            <SheetTabs />
            <StatusBar />
            <Taskbar />
            <SideGrip />
            <Cursor width="12" height="17" viewBox="0 0 12 17">
                <path d="M1 1V13L4 10.5 6 15.5 8.5 14.5 6.5 9.5H10Z" fill="#fff" stroke="#333" />
            </Cursor>
        </Window>
    )
}

const Reset = createGlobalStyle`
    * { box-sizing: border-box; }
    body { margin: 0; overflow: hidden; }
    svg { display: block; flex: none; }
`

const Window = styled.div`
    position: relative;
    width: 1280px;
    height: 720px;
    overflow: hidden;
    display: flex;
    flex-direction: column;
    font-family: ${UI_FONT};
    font-size: 10.5px;
    font-variant-ligatures: none;
    color: #444;
    background: #e6e6e6;
`
const FitBox = styled.span`
    display: flex;
    flex: none;
    width: ${p => p.$w}px;
    white-space: pre;
`
const FitText = styled.span`
    flex: none;
    transform-origin: left center;
`
const Slot = styled.div`
    flex: 0 0 ${p => p.$w}px;
    width: ${p => p.$w}px;
    display: flex;
    align-items: center;
    justify-content: center;
`
const Push = styled.div`
    flex: 1;
`
const Stack = styled.div`
    flex: none;
    width: ${p => p.$w ? `${p.$w}px` : "auto"};
    display: flex;
    flex-direction: column;
`
const Line = styled.div`
    display: flex;
    align-items: center;
    height: ${p => p.$h}px;
`
const Rule = styled.div`
    width: 1px;
    height: ${p => p.$h}px;
    background: #d2d2d0;
`

const Title = styled.header`
    position: relative;
    flex: none;
    height: 28px;
    display: flex;
    align-items: center;
    background: #217346;
    color: #fff;
`
const Circuit = styled.svg`
    position: absolute;
    right: 0;
    top: 0;
    fill: none;
    stroke: #1b6339;
    stroke-width: 3px;
    opacity: 0.8;
`
const TitleText = styled.div`
    position: relative;
    display: flex;
    font-size: 10.5px;
    line-height: 14px;
`
const Toggle = styled.div`
    width: 31px;
    height: 13px;
    padding: 2px 3px;
    border: 1px solid #d9ebe0;
    border-radius: 7px;
`
const Knob = styled.div`
    width: 7px;
    height: 7px;
    border-radius: 50%;
    background: #fff;
`
const Avatar = styled.div`
    position: relative;
    width: 20px;
    height: 20px;
    border-radius: 50%;
    background: #55796f;
    color: #d8e4df;
    font-size: 9.5px;
    line-height: 20px;
    text-align: center;
`

const Menu = styled.nav`
    flex: none;
    height: 28px;
    display: flex;
    align-items: center;
    padding-right: 10px;
    background: #f4f4f1;
`
const MenuTab = styled.div`
    margin-left: ${p => p.$gap}px;
    height: 24px;
    padding-top: 4px;
    line-height: 15px;
    font-size: 11.5px;
    font-family: ${p => p.$active ? SEMI_FONT : "inherit"};
    font-weight: ${p => p.$active ? 600 : 400};
    color: ${p => p.$active ? "#333" : "#444"};
    box-shadow: ${p => p.$active ? "inset 0 -2px #217346" : "none"};
`
const ShareButton = styled.div`
    width: ${p => p.$w}px;
    height: 19px;
    margin: 0 0 1px 7px;
    padding-left: 5px;
    display: flex;
    align-items: center;
    gap: 3px;
    border: 1px solid #e4e4e1;
    border-radius: 2px;
    background: #fff;
    color: #217346;
    font-family: ${SEMI_FONT};
    font-size: 11px;
    font-weight: 600;
`

const RibbonBar = styled.section`
    flex: none;
    height: 79px;
    padding-top: 1px;
    display: flex;
    border-bottom: 2px solid #d2d2d0;
    background: #f4f4f1;
`
const GroupBox = styled.div`
    flex: 0 0 ${p => p.$w}px;
    display: flex;
    flex-direction: column;
`
const GroupRule = styled.div`
    flex: 0 0 1px;
    height: 73px;
    background: #c9c9c7;
`
const GroupBody = styled.div`
    display: flex;
    align-items: flex-start;
    height: 63px;
`
const GroupFoot = styled.div`
    display: flex;
    height: 13px;
`
const GroupLabel = styled.div`
    flex: 1;
    display: flex;
    justify-content: center;
    font-size: 9px;
    line-height: 13px;
`
const Big = styled.div`
    flex: 0 0 ${p => p.$w}px;
    display: flex;
    flex-direction: column;
    align-items: center;
`
const BigIcon = styled.div`
    height: 30px;
    display: flex;
    align-items: center;
`
const BigLine = styled.div`
    height: 13px;
    display: flex;
    align-items: center;
    gap: 2px;
    line-height: 13px;
`
const Combo = styled.div`
    width: ${p => p.$w}px;
    height: 20px;
    padding: 0 2px;
    display: flex;
    align-items: center;
    justify-content: space-between;
    border: 1px solid #c6c6c6;
    border-left-width: ${p => p.$joined ? 0 : 1}px;
    background: #fff;
`
const FontSizer = styled.div`
    display: flex;
    align-items: flex-start;
    font-size: ${p => p.$size}px;
    line-height: 16px;
`
const Style = styled.span`
    font-size: 12px;
    line-height: 14px;
    color: #333;
    font-weight: ${p => p.$weight || 400};
    font-style: ${p => p.$italic ? "italic" : "normal"};
    border-bottom: ${p => p.$under ? "1px solid #444" : "none"};
`
const FontColor = styled.div`
    width: 13px;
    height: 15px;
    border-bottom: 3px solid #c00000;
    font-size: 12px;
    line-height: 11px;
    text-align: center;
`
const Pressed = styled.div`
    width: 18px;
    height: 19px;
    display: flex;
    align-items: center;
    justify-content: center;
    background: #c8c8c6;
`
const WrapIcon = styled.div`
    display: flex;
    flex-direction: column;
    font-size: 9px;
    line-height: 7px;
    span { display: flex; }
`
const Symbol = styled.span`
    font-size: ${p => p.$size}px;
    line-height: 16px;
`
const Decimals = styled.div`
    display: flex;
    flex-direction: column;
    align-items: flex-end;
    font-size: 8px;
    line-height: 7px;
    letter-spacing: -0.5px;
    span { display: flex; align-items: center; }
`
const SortIcon = styled.div`
    display: flex;
    align-items: center;
`
const SortLetters = styled.div`
    display: flex;
    flex-direction: column;
    font-size: 12px;
    line-height: 12px;
    b { font-weight: 400; color: #2f7fc1; }
    i { font-style: normal; }
`
const Collapse = styled.div`
    align-self: flex-end;
    padding: 0 7px 2px 0;
`

const Formula = styled.div`
    flex: none;
    height: 35px;
    padding: 7px 4px 7px 4px;
    display: flex;
    align-items: center;
`
const NameBox = styled.div`
    width: 84px;
    height: 20px;
    padding: 0 5px 0 4px;
    display: flex;
    align-items: center;
    justify-content: space-between;
    border: 1px solid #cfcfcf;
    background: #fff;
    font-size: 9.5px;
`
const FormulaButtons = styled.div`
    width: 92px;
    height: 20px;
    display: flex;
    border: 1px solid #cfcfcf;
    background: #fff;
`
const Fx = styled.span`
    font: italic 14px/16px "Liberation Serif", serif;
    color: #333;
    small { font-size: 10px; }
`
const FormulaInput = styled.div`
    flex: 1;
    height: 20px;
    margin-left: 2px;
    padding-right: 3px;
    display: flex;
    align-items: center;
    justify-content: flex-end;
    border: 1px solid #cfcfcf;
    background: #fff;
`

const SheetArea = styled.main`
    flex: none;
    height: 479px;
    display: flex;
`
const SheetPane = styled.div`
    position: relative;
    width: 1264px;
    overflow: hidden;
    border-right: 1px solid #c4c4c4;
`
const GridRow = styled.div`
    display: grid;
    grid-template-columns: 27px ${columns.map(c => `${c[1]}px`).join(" ")};
    grid-template-rows: ${p => p.$head ? 20 : 24}px;
    background: ${p => p.$head ? "#e6e6e6" : "#fff"};
`
const ColHead = styled.div`
    display: flex;
    justify-content: center;
    border-right: 1px solid #c6c6c6;
    border-bottom: 1px solid #bdbdbd;
    font-size: 12px;
    line-height: 21px;
    color: #3c3c3c;
`
const Corner = styled.div`
    display: flex;
    align-items: flex-end;
    justify-content: flex-end;
    padding: 0 2px 2px 0;
    border-right: 1px solid #c6c6c6;
    border-bottom: 1px solid #bdbdbd;
`
const RowHead = styled.div`
    position: relative;
    z-index: 1;
    border-right: ${p => p.$active ? "2px solid #217346" : "1px solid #a9a9a9"};
    border-bottom: 1px solid #c9c9c9;
    background: ${p => p.$active ? "#d2d2d2" : "#e6e6e6"};
    color: ${p => p.$active ? "#217346" : "#3c3c3c"};
    font-size: 12.5px;
    line-height: 27px;
    text-align: center;
`
const Cell = styled.div`
    grid-column: span ${p => p.$span || 1};
    display: flex;
    align-items: center;
    min-width: 0;
    border-right: 1px solid ${p => p.$right || "transparent"};
    border-bottom: 1px solid ${p => p.$bottom || GRID};
    background: ${p => p.$fill || "#fff"};
`
const Band = styled.div`
    background: #002060;
`
const Text = styled.span`
    display: flex;
    margin-left: ${p => p.$x || 0}px;
    padding-top: ${p => p.$drop || 0}px;
    font-family: ${CELL_FONT};
    font-size: ${p => p.$size || 17}px;
    line-height: ${p => p.$drop ? 19 : 23}px;
    font-weight: ${p => p.$bold ? 700 : 400};
    font-style: ${p => p.$italic ? "italic" : "normal"};
    color: ${p => p.$color || "#0c0c0c"};
`
const Tip = styled.div`
    position: absolute;
    left: 1016px;
    top: 462px;
    width: 76px;
    height: 16px;
    padding-left: 3px;
    border: 1px solid #b9b9b9;
    background: #fff;
    font-size: 10px;
    line-height: 14px;
    color: #666;
`
const VScroll = styled.div`
    width: 14px;
    margin-top: 1px;
    display: flex;
    flex-direction: column;
    align-items: center;
    background: #dcdcdc;
`
const ScrollButton = styled.div`
    flex: none;
    width: 13px;
    height: 13px;
    display: flex;
    align-items: center;
    justify-content: center;
    border: 1px solid #c0c0c0;
    background: #fff;
`
const VThumb = styled.div`
    width: 13px;
    height: 101px;
    border: 1px solid #b0b0b0;
    background: #fff;
`

const TabStrip = styled.div`
    flex: none;
    height: 20px;
    display: flex;
    align-items: flex-start;
    padding: 1px 16px 0 0;
    border-top: 1px solid #b5b5b5;
    border-bottom: 1px solid #cdcdcd;
    background: #e6e6e6;
    font-size: 11px;
    line-height: 10px;
    & > ${Slot} { height: 17px; }
`
const SheetTab = styled.div`
    width: ${p => p.$w}px;
    height: 15px;
    margin-right: ${p => p.$kind === "active" ? 2 : 3}px;
    display: flex;
    justify-content: center;
    color: ${p => p.$kind === "active" ? "#217346" : "#fff"};
    font-weight: ${p => p.$kind === "active" ? 700 : 400};
    background: ${p => ({ active: "linear-gradient(#fff 20%, #f2a9a4)", red: "#c00000", navy: "#002060" })[p.$kind]};
    border-bottom: ${p => p.$kind === "active" ? "1px solid #217346" : "none"};
`
const PlainTab = styled.div`
    width: ${p => p.$w}px;
    height: 14px;
    display: flex;
    justify-content: center;
    border-right: 1px solid #a5a5a5;
    color: #555;
`
const HScroll = styled.div`
    width: 486px;
    height: 13px;
    margin-top: 1px;
    display: flex;
    background: #dadada;
`
const HThumb = styled.div`
    width: 299px;
    height: 13px;
    margin-left: 91px;
    border: 1px solid #8a8a8a;
    background: #f3f3f3;
`

const Status = styled.footer`
    flex: none;
    height: 18px;
    padding: 0 7px;
    display: flex;
    align-items: center;
    background: #f4f4f1;
    font-size: 9px;
`
const ViewButton = styled.div`
    width: 33px;
    height: 18px;
    display: flex;
    align-items: center;
    justify-content: center;
    background: ${p => p.$on ? "#c8c8c6" : "transparent"};
`
const Slider = styled.div`
    width: 84px;
    height: 10px;
    display: flex;
    justify-content: center;
    padding-left: 5px;
    background: linear-gradient(#a8a8a8, #a8a8a8) center / 100% 1px no-repeat;
`
const SliderKnob = styled.div`
    width: 4px;
    height: 10px;
    background: #666;
`
const Zoom = styled.div`
    display: flex;
    margin-left: 8px;
    font-size: 9.5px;
`

const Bar = styled.div`
    flex: none;
    height: 33px;
    display: flex;
    align-items: stretch;
    background: #020b0e;
    color: #fff;
`
const Search = styled.div`
    width: 286.5px;
    padding-left: 9px;
    display: flex;
    align-items: center;
    gap: 9px;
    background: #f2f2f2;
    color: #444;
    font-size: 12.5px;
    border-bottom: 1px solid #bbb;
`
const TaskItem = styled.div`
    width: 41.4px;
    display: flex;
    align-items: center;
    justify-content: center;
    background: ${p => p.$open ? "#2e3a3c" : "transparent"};
    box-shadow: ${p => p.$open ? "inset 0 -2px #7fd4ee" : "none"};
`
const Clock = styled.div`
    width: 59px;
    padding-top: 1px;
    display: flex;
    flex-direction: column;
    align-items: center;
    font-size: 10px;
    line-height: 15px;
`
const Desk = styled.div`
    width: 4px;
    border-left: 1px solid #4a5356;
`
const SideGrip = styled.div`
    position: absolute;
    right: 0;
    top: 622px;
    width: 6px;
    height: 38px;
    border-radius: 3px 0 0 3px;
    background: #6a6a6a;
`
const Cursor = styled.svg`
    position: absolute;
    left: 981px;
    top: 651px;
`
